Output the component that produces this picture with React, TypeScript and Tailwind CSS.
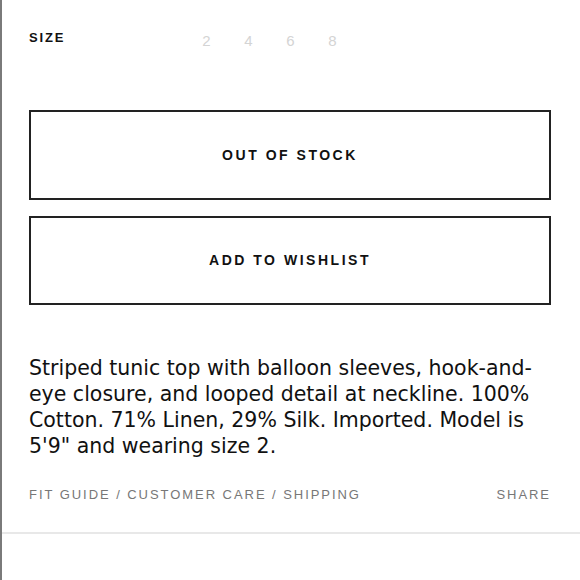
export default function App() {
  const sizes = ['2', '4', '6', '8'];

  return (
    <div className="w-[580px] h-[580px] bg-white border-l-2 border-[#7a7a7a] font-['Liberation_Sans',Arial,sans-serif] overflow-hidden">
      <div className="pl-[27px] pr-[29px]">
        {/* Size selector */}
        <div className="flex items-center pt-[27px] h-[48px]">
          <span className="w-[171px] text-[13px] font-bold tracking-[0.14em] text-[#111]">SIZE</span>
          <div className="flex gap-[29px] text-[15px] text-[#d4d4d4] mt-[7px]">
            {sizes.map((s) => (
              <span key={s} className="w-[13px] text-center">
                {s}
              </span>
            ))}
          </div>
        </div>

        {/* Actions */}
        <div className="flex flex-col gap-[16px] mt-[62px]">
          <button className="h-[90px] w-full border-2 border-[#222] text-[14px] font-bold tracking-[0.18em] text-[#111]">
            OUT OF STOCK
          </button>
          <button className="h-[89px] w-full border-2 border-[#222] text-[14px] font-bold tracking-[0.18em] text-[#111]">
            ADD TO WISHLIST
          </button>
        </div>

        {/* Description */}
        <p className="mt-[50px] w-[522px] font-['DejaVu_Sans',sans-serif] text-[20.5px] leading-[26px] text-[#111]">
          Striped tunic top with balloon sleeves, hook-and-eye closure, and looped detail at neckline. 100% Cotton. 71% Linen, 29% Silk. Imported. Model is 5'9" and wearing size 2.
        </p>

        {/* Links */}
        <div className="flex justify-between items-center mt-[26px] text-[13px] tracking-[0.15em] text-[#777]">
          <span>FIT GUIDE / CUSTOMER CARE / SHIPPING</span>
          <span>SHARE</span>
        </div>
      </div>

      <div className="mt-[27px] h-[2px] bg-[#e8e8e8]" />
    </div>
  );
}
